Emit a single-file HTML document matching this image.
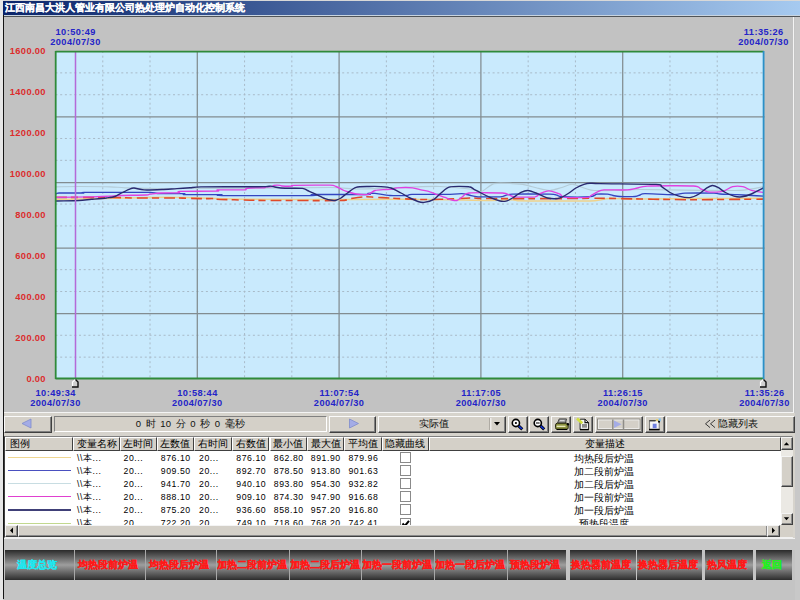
<!DOCTYPE html>
<html><head><meta charset="utf-8"><style>
*{margin:0;padding:0;box-sizing:border-box}
html,body{width:800px;height:600px;overflow:hidden;background:#c4c4c4;font-family:"Liberation Sans",sans-serif;position:relative}
.abs{position:absolute}
#lstrip{position:absolute;left:0;top:0;width:3px;height:600px;background:#e6e6e6}
#lline{position:absolute;left:3px;top:15px;width:1px;height:584px;background:#151515}
#title{position:absolute;left:3px;top:1px;width:797px;height:13.5px;background:linear-gradient(to right,#0a246a 0%,#a6caf0 100%);color:#fff;font-weight:700;-webkit-text-stroke:0.2px #fff;font-size:10px;line-height:13.5px;padding-left:2px;white-space:nowrap;letter-spacing:0px}
#topstrip{position:absolute;left:0;top:0;width:800px;height:1px;background:#d8d8d8}
#tline1{position:absolute;left:3px;top:14.5px;width:797px;height:1px;background:#c8d4e0}
#tline2{position:absolute;left:3px;top:15.5px;width:797px;height:1px;background:#505458}
#panel{position:absolute;left:4px;top:16.5px;width:790px;height:396px;background:#c2c2c2;border-right:1px solid #f4f4f4;border-bottom:1px solid #f4f4f4}
#rstrip{position:absolute;left:795px;top:16.5px;width:5px;height:584px;background:#c8c8c8}
.yl{position:absolute;left:0;width:45.9px;text-align:right;color:#dc2c2c;font-weight:bold;font-size:9.3px;line-height:12px;letter-spacing:0.35px}
.tl{position:absolute;width:80px;text-align:center;color:#2424c8;font-weight:bold;font-size:9.2px;line-height:10px;letter-spacing:0.45px;text-indent:0.45px}
#lower{position:absolute;left:4px;top:413px;width:791px;height:125px;background:#d6d3cc}
.btn{position:absolute;top:416px;height:16.5px;background:#d4d0c8;border-top:1px solid #fafafa;border-left:1px solid #fafafa;border-right:1px solid #404040;border-bottom:1px solid #404040;box-shadow:inset -1px -1px 0 #808080}
.field{position:absolute;top:416px;height:16px;background:#d4d0c8;border-top:1px solid #808080;border-left:1px solid #808080;border-right:1px solid #fff;border-bottom:1px solid #fff;font-size:9.5px;line-height:14px;text-align:center;color:#101010;font-weight:500}
#table{position:absolute;left:4px;top:436px;width:789px;height:102px;background:#fff;border-top:1px solid #808080;border-left:1px solid #404040;border-right:1px solid #e8e8e8;border-bottom:1px solid #f0f0f0}
.th{position:absolute;top:437px;height:13.5px;background:#d4d0c8;border-top:1px solid #fff;border-left:1px solid #fff;border-right:1px solid #404040;border-bottom:1px solid #404040;font-size:9.5px;line-height:11.5px;text-align:center;color:#000;font-weight:500;white-space:nowrap;overflow:hidden}
.td{position:absolute;font-size:8.7px;line-height:13px;color:#000;white-space:nowrap;letter-spacing:0.55px}
.num{text-align:right;padding-right:2.3px}
.desc{left:428px;width:352px;text-align:center;font-size:9.5px;letter-spacing:0}
.lg{position:absolute;left:8px;width:63px;height:1.2px}
.cb{position:absolute;left:400px;width:11px;height:11px;border:1px solid #8a8a8a;background:#fff;margin-top:0.5px;font-size:9px;line-height:10px;text-align:center;color:#000}
#clip{position:absolute;left:5px;top:451px;width:775px;height:74px;overflow:hidden}
.sbb{position:absolute;background:#d4d0c8;border-top:1px solid #f4f4f4;border-left:1px solid #f4f4f4;border-right:1px solid #404040;border-bottom:1px solid #404040;box-shadow:inset -1px -1px 0 #8a8a8a}
.bb{position:absolute;top:550.3px;height:29.4px;background:linear-gradient(to bottom,#2a2a2a 0%,#424242 10%,#9e9e9e 50%,#444444 90%,#2c2c2c 100%);font-size:9.7px;font-weight:700;-webkit-text-stroke:0.25px currentColor;line-height:29px;text-align:center;padding-right:4px;white-space:nowrap;overflow:hidden;border-left:1px solid #a8a8a8}
#bstrip{position:absolute;left:4px;top:538px;width:791px;height:12px;background:#c8c8c8;border-top:1px solid #f0f0f0}
</style></head><body>
<div id="topstrip"></div>
<div id="lstrip"></div>
<div id="title">江西南昌大洪人管业有限公司热处理炉自动化控制系统</div>
<div id="tline1"></div><div id="tline2"></div>
<div id="panel"></div>
<div id="rstrip"></div>
<svg width="800" height="600" style="position:absolute;left:0;top:0">
<rect x="55.5" y="51" width="708.3" height="328" fill="#c9eafd"/>
<line x1="102.77" y1="51" x2="102.77" y2="379" stroke="#a8bac8" stroke-width="1" stroke-dasharray="2,2.7"/>
<line x1="150.03" y1="51" x2="150.03" y2="379" stroke="#a8bac8" stroke-width="1" stroke-dasharray="2,2.7"/>
<line x1="244.57" y1="51" x2="244.57" y2="379" stroke="#a8bac8" stroke-width="1" stroke-dasharray="2,2.7"/>
<line x1="291.83" y1="51" x2="291.83" y2="379" stroke="#a8bac8" stroke-width="1" stroke-dasharray="2,2.7"/>
<line x1="386.37" y1="51" x2="386.37" y2="379" stroke="#a8bac8" stroke-width="1" stroke-dasharray="2,2.7"/>
<line x1="433.63" y1="51" x2="433.63" y2="379" stroke="#a8bac8" stroke-width="1" stroke-dasharray="2,2.7"/>
<line x1="528.17" y1="51" x2="528.17" y2="379" stroke="#a8bac8" stroke-width="1" stroke-dasharray="2,2.7"/>
<line x1="575.43" y1="51" x2="575.43" y2="379" stroke="#a8bac8" stroke-width="1" stroke-dasharray="2,2.7"/>
<line x1="669.97" y1="51" x2="669.97" y2="379" stroke="#a8bac8" stroke-width="1" stroke-dasharray="2,2.7"/>
<line x1="717.23" y1="51" x2="717.23" y2="379" stroke="#a8bac8" stroke-width="1" stroke-dasharray="2,2.7"/>
<line x1="55.5" y1="72.87" x2="764.5" y2="72.87" stroke="#a8bac8" stroke-width="1" stroke-dasharray="2,2.7"/>
<line x1="55.5" y1="94.73" x2="764.5" y2="94.73" stroke="#a8bac8" stroke-width="1" stroke-dasharray="2,2.7"/>
<line x1="55.5" y1="138.47" x2="764.5" y2="138.47" stroke="#a8bac8" stroke-width="1" stroke-dasharray="2,2.7"/>
<line x1="55.5" y1="160.33" x2="764.5" y2="160.33" stroke="#a8bac8" stroke-width="1" stroke-dasharray="2,2.7"/>
<line x1="55.5" y1="204.07" x2="764.5" y2="204.07" stroke="#a8bac8" stroke-width="1" stroke-dasharray="2,2.7"/>
<line x1="55.5" y1="225.93" x2="764.5" y2="225.93" stroke="#a8bac8" stroke-width="1" stroke-dasharray="2,2.7"/>
<line x1="55.5" y1="269.67" x2="764.5" y2="269.67" stroke="#a8bac8" stroke-width="1" stroke-dasharray="2,2.7"/>
<line x1="55.5" y1="291.53" x2="764.5" y2="291.53" stroke="#a8bac8" stroke-width="1" stroke-dasharray="2,2.7"/>
<line x1="55.5" y1="335.27" x2="764.5" y2="335.27" stroke="#a8bac8" stroke-width="1" stroke-dasharray="2,2.7"/>
<line x1="55.5" y1="357.13" x2="764.5" y2="357.13" stroke="#a8bac8" stroke-width="1" stroke-dasharray="2,2.7"/>
<line x1="197.30" y1="51" x2="197.30" y2="379" stroke="#828c90" stroke-width="1.25"/>
<line x1="55.5" y1="116.90" x2="764.5" y2="116.90" stroke="#828c90" stroke-width="1.25"/>
<line x1="339.10" y1="51" x2="339.10" y2="379" stroke="#828c90" stroke-width="1.25"/>
<line x1="55.5" y1="182.50" x2="764.5" y2="182.50" stroke="#828c90" stroke-width="1.25"/>
<line x1="480.90" y1="51" x2="480.90" y2="379" stroke="#828c90" stroke-width="1.25"/>
<line x1="55.5" y1="248.10" x2="764.5" y2="248.10" stroke="#828c90" stroke-width="1.25"/>
<line x1="622.70" y1="51" x2="622.70" y2="379" stroke="#828c90" stroke-width="1.25"/>
<line x1="55.5" y1="313.70" x2="764.5" y2="313.70" stroke="#828c90" stroke-width="1.25"/>
<path d="M56.0,186.8 C59.2,186.7 72.8,186.5 80.0,186.5 C87.2,186.5 104.0,186.6 110.0,186.8 C116.0,186.9 118.3,187.5 125.0,187.8 C131.7,188.0 143.3,188.4 160.0,188.5 C176.7,188.6 227.3,188.4 250.0,188.3 C272.7,188.2 315.3,187.4 330.0,187.5 C344.7,187.6 349.3,189.1 360.0,189.0 C370.7,188.9 399.3,187.3 410.0,187.0 C420.7,186.7 432.0,186.2 440.0,186.5 C448.0,186.8 464.5,188.3 470.0,189.0 C475.5,189.7 477.8,192.5 481.0,191.8 C484.2,191.0 489.8,184.7 494.0,183.6 C498.2,182.5 508.4,183.4 512.5,183.6 C516.6,183.8 521.7,184.2 525.0,184.8 C528.3,185.4 533.7,187.2 537.0,188.0 C540.3,188.8 546.7,190.6 550.0,190.5 C553.3,190.4 558.9,188.3 562.0,187.5 C565.1,186.7 568.7,183.9 573.0,184.3 C577.3,184.7 585.1,189.8 594.0,190.5 C602.9,191.2 625.9,189.5 640.0,189.5 C654.1,189.5 686.7,190.2 700.0,190.3 C713.3,190.4 731.5,190.8 740.0,190.3 C748.5,189.8 760.4,187.2 763.5,186.7" fill="none" stroke="#b4ccd8" stroke-width="1.2"/>
<path d="M56.0,199.5 C68.5,199.2 132.9,197.8 150.0,197.5 C167.1,197.2 170.7,197.3 184.0,197.5 C197.3,197.7 227.9,198.9 250.0,199.2 C272.1,199.5 330.0,199.5 350.0,199.5 C370.0,199.5 386.7,199.3 400.0,199.3 C413.3,199.3 438.4,199.6 450.0,199.8 C461.6,200.0 478.7,200.5 487.0,200.5 C495.3,200.5 507.6,199.8 512.0,199.8 C516.4,199.8 514.9,200.6 520.0,200.8 C525.1,201.0 540.7,201.0 550.0,201.0 C559.3,201.0 582.0,201.3 590.0,201.0 C598.0,200.7 603.3,198.9 610.0,198.6 C616.7,198.3 628.0,199.0 640.0,199.0 C652.0,199.0 683.5,198.6 700.0,198.5 C716.5,198.4 755.0,198.3 763.5,198.3" fill="none" stroke="#efd28a" stroke-width="1.5"/>
<path d="M56.0,197.4 C63.2,197.4 99.5,197.3 110.0,197.4 C120.5,197.5 126.3,197.9 135.0,198.0 C143.7,198.1 166.3,197.9 175.0,198.0 C183.7,198.1 194.8,198.5 200.0,198.6 C205.2,198.7 211.9,198.5 214.0,198.6 C216.1,198.7 211.2,199.0 216.0,199.2 C220.8,199.5 241.5,200.0 250.0,200.2 C258.5,200.4 268.0,200.5 280.0,200.5 C292.0,200.5 330.7,200.7 340.0,200.5 C349.3,200.3 346.7,199.2 350.0,198.7 C353.3,198.2 361.7,196.9 365.0,196.8 C368.3,196.6 371.7,197.1 375.0,197.3 C378.3,197.5 386.7,197.8 390.0,198.0 C393.3,198.2 396.0,198.4 400.0,198.6 C404.0,198.8 414.7,199.4 420.0,199.5 C425.3,199.6 433.3,199.5 440.0,199.3 C446.7,199.1 464.7,198.1 470.0,198.0 C475.3,197.9 476.0,198.3 480.0,198.4 C484.0,198.5 493.3,198.6 500.0,198.6 C506.7,198.6 522.0,198.6 530.0,198.6 C538.0,198.6 550.7,198.6 560.0,198.6 C569.3,198.6 589.3,198.2 600.0,198.3 C610.7,198.4 630.7,198.8 640.0,199.0 C649.3,199.2 662.0,199.4 670.0,199.5 C678.0,199.6 687.5,199.8 700.0,199.7 C712.5,199.6 755.0,199.2 763.5,199.1" fill="none" stroke="#e04a2a" stroke-width="1.6" stroke-dasharray="11,4,7,5"/>
<path d="M56.0,194.0 C56.4,193.9 55.4,193.1 59.0,193.0 C62.6,192.9 79.7,193.1 83.0,193.0 C86.3,192.9 77.9,192.5 84.0,192.4 C90.1,192.3 120.2,192.4 129.0,192.4 C137.8,192.4 145.9,192.2 150.0,192.4 C154.1,192.6 155.5,193.4 160.0,193.6 C164.5,193.8 180.7,193.5 184.0,193.6 C187.3,193.7 180.1,194.5 185.0,194.6 C189.9,194.7 216.1,194.5 221.0,194.6 C225.9,194.7 209.9,195.4 222.0,195.5 C234.1,195.6 299.9,195.6 312.0,195.5 C324.1,195.4 305.7,194.6 313.0,194.5 C320.3,194.4 359.7,194.6 367.0,194.5 C374.3,194.4 366.9,193.5 368.0,193.4 C369.1,193.3 372.1,193.1 375.0,193.4 C377.9,193.7 385.7,195.2 390.0,195.5 C394.3,195.8 404.1,195.6 407.0,195.5 C409.9,195.4 406.3,194.6 412.0,194.4 C417.7,194.2 443.3,194.4 450.0,194.3 C456.7,194.2 459.5,193.5 462.0,193.6 C464.5,193.7 466.9,194.6 469.0,195.0 C471.1,195.4 473.9,196.5 478.0,196.8 C482.1,197.0 496.7,196.8 500.0,196.8 C503.3,196.7 501.4,196.6 503.0,196.3 C504.6,196.0 505.7,194.5 512.0,194.2 C518.3,194.0 544.0,194.1 550.0,194.2 C556.0,194.4 555.4,194.9 557.0,195.2 C558.6,195.5 557.6,196.5 562.0,196.7 C566.4,196.9 585.3,197.0 590.0,196.7 C594.7,196.4 594.7,194.6 597.0,194.2 C599.3,193.9 605.4,194.1 607.5,194.2 C609.6,194.4 611.3,195.2 613.0,195.5 C614.7,195.8 617.1,196.4 620.0,196.5 C622.9,196.6 632.3,196.7 635.0,196.5 C637.7,196.3 638.7,195.4 640.0,195.0 C641.3,194.6 640.5,193.6 645.0,193.6 C649.5,193.6 668.7,194.8 674.0,194.7 C679.3,194.6 679.7,193.4 685.0,193.2 C690.3,193.0 709.3,193.1 714.0,193.2 C718.7,193.3 716.9,193.8 720.0,194.0 C723.1,194.2 732.7,194.5 737.0,194.7 C741.3,194.9 748.5,195.3 752.0,195.5 C755.5,195.7 762.0,196.0 763.5,196.1" fill="none" stroke="#3446c0" stroke-width="1.35"/>
<path d="M56.0,197.4 C60.8,197.3 84.8,197.1 92.0,196.9 C99.2,196.7 106.4,196.4 110.0,196.2 C113.6,196.0 114.2,195.7 119.0,195.5 C123.8,195.3 141.9,195.2 146.0,195.0 C150.1,194.8 148.0,194.5 150.0,194.2 C152.0,194.0 157.1,193.2 161.0,193.0 C164.9,192.8 176.5,193.0 179.0,192.8 C181.5,192.5 174.9,191.6 180.0,191.4 C185.1,191.2 211.9,191.3 217.0,191.1 C222.1,190.9 214.4,190.1 218.0,189.9 C221.6,189.7 240.3,190.1 244.0,189.9 C247.7,189.7 245.2,189.0 246.0,188.7 C246.8,188.4 247.6,188.1 250.0,188.0 C252.4,187.9 261.9,187.9 264.0,187.8 C266.1,187.6 264.9,186.9 266.0,186.8 C267.1,186.7 270.9,186.9 272.0,186.7 C273.1,186.5 272.9,185.6 274.0,185.4 C275.1,185.2 278.9,185.2 280.0,185.3 C281.1,185.4 280.4,185.9 282.0,186.0 C283.6,186.1 290.4,186.2 292.0,186.1 C293.6,186.0 288.9,185.4 294.0,185.3 C299.1,185.2 324.4,185.1 330.0,185.2 C335.6,185.4 334.1,185.8 336.0,186.5 C337.9,187.2 342.1,189.7 344.0,190.5 C345.9,191.3 348.4,191.9 350.0,192.4 C351.6,192.9 353.6,193.7 356.0,194.0 C358.4,194.3 365.5,194.8 368.0,194.3 C370.5,193.8 373.0,191.1 375.0,190.5 C377.0,189.9 380.9,189.7 383.0,189.6 C385.1,189.5 389.1,189.6 391.0,189.4 C392.9,189.2 394.6,188.0 397.5,187.8 C400.4,187.6 409.4,187.5 412.5,187.8 C415.6,188.1 418.7,189.4 421.0,189.9 C423.3,190.4 427.8,191.1 430.0,191.8 C432.2,192.4 435.5,194.1 437.5,194.9 C439.5,195.7 443.1,196.7 445.0,197.4 C446.9,198.1 450.4,199.6 452.0,200.0 C453.6,200.4 455.6,200.9 457.0,200.5 C458.4,200.1 460.9,197.8 462.5,196.8 C464.1,195.8 463.7,193.5 469.0,193.0 C474.3,192.5 497.2,192.7 502.5,193.0 C507.8,193.3 507.3,194.4 509.0,194.9 C510.7,195.4 511.5,196.5 515.0,196.8 C518.5,197.0 531.7,197.2 535.0,196.8 C538.3,196.3 538.4,194.4 540.0,193.6 C541.6,192.8 545.4,191.4 547.0,191.1 C548.6,190.8 550.3,190.9 552.0,191.3 C553.7,191.7 558.3,193.4 560.0,194.2 C561.7,195.1 561.3,197.0 565.0,197.4 C568.7,197.8 584.0,197.7 587.5,197.4 C591.0,197.1 589.7,196.3 591.0,195.5 C592.3,194.7 595.8,192.5 597.5,191.8 C599.2,191.0 600.0,190.1 604.0,189.9 C608.0,189.7 623.0,190.2 627.5,189.9 C632.0,189.6 634.8,188.5 637.5,188.0 C640.2,187.5 640.0,186.4 647.5,186.1 C655.0,185.8 686.4,185.6 693.5,186.0 C700.6,186.4 698.8,188.1 700.7,188.9 C702.6,189.7 705.5,191.4 708.0,191.8 C710.5,192.2 717.3,192.0 719.6,191.8 C721.9,191.6 723.7,191.0 725.4,190.3 C727.1,189.6 730.3,187.2 732.6,186.7 C734.9,186.2 740.3,186.2 742.8,186.7 C745.3,187.2 748.6,189.5 751.4,190.3 C754.2,191.1 761.9,192.2 763.5,192.5" fill="none" stroke="#e040e0" stroke-width="1.35"/>
<path d="M56.0,201.0 C59.1,200.9 74.3,200.7 79.0,200.5 C83.7,200.3 87.8,199.6 91.5,199.3 C95.2,199.0 103.4,198.4 106.5,198.0 C109.6,197.6 113.0,197.2 115.0,196.5 C117.0,195.8 119.6,194.0 121.5,193.0 C123.4,192.0 127.3,190.0 129.0,189.3 C130.7,188.6 132.0,187.9 134.0,188.0 C136.0,188.1 140.3,189.7 144.0,189.9 C147.7,190.1 157.6,189.7 162.0,189.5 C166.4,189.3 173.3,188.8 177.0,188.6 C180.7,188.4 186.8,188.0 190.0,187.8 C193.2,187.6 193.0,187.0 201.0,186.9 C209.0,186.8 241.3,186.8 250.0,186.8 C258.7,186.7 263.2,186.7 266.0,186.6 C268.8,186.5 269.7,186.0 271.0,186.1 C272.3,186.2 274.1,186.9 276.0,187.2 C277.9,187.5 281.5,188.0 285.0,188.2 C288.5,188.4 299.5,188.1 302.5,188.4 C305.5,188.7 305.7,189.7 307.5,190.5 C309.3,191.3 313.7,193.2 316.0,194.3 C318.3,195.4 322.9,197.8 325.0,198.6 C327.1,199.4 330.5,200.1 332.0,200.3 C333.5,200.5 334.8,200.5 336.0,200.2 C337.2,199.9 339.5,199.0 341.0,198.0 C342.5,197.0 345.5,194.4 347.5,193.0 C349.5,191.6 353.1,188.3 356.0,187.4 C358.9,186.5 365.7,186.6 369.0,186.5 C372.3,186.4 378.1,186.4 381.0,186.6 C383.9,186.8 388.3,187.1 391.0,188.0 C393.7,188.9 398.5,191.7 401.0,193.0 C403.5,194.3 407.7,196.9 410.0,198.0 C412.3,199.1 416.1,200.9 418.0,201.5 C419.9,202.1 421.9,202.7 424.0,202.4 C426.1,202.1 431.7,200.6 434.0,199.3 C436.3,198.0 438.9,194.7 441.0,193.0 C443.1,191.3 446.3,187.7 450.0,186.9 C453.7,186.1 465.8,186.4 469.0,186.8 C472.2,187.1 472.4,188.5 474.0,189.3 C475.6,190.1 478.9,191.9 481.0,193.0 C483.1,194.1 487.5,196.3 490.0,197.4 C492.5,198.5 497.9,200.5 500.0,201.0 C502.1,201.5 504.3,201.5 506.0,201.1 C507.7,200.7 510.5,199.2 512.5,198.0 C514.5,196.8 518.9,193.4 521.0,192.4 C523.1,191.4 525.8,190.3 528.0,190.5 C530.2,190.7 534.9,192.6 537.5,193.6 C540.1,194.6 544.8,197.3 547.5,198.0 C550.2,198.7 555.5,198.8 557.5,198.6 C559.5,198.4 561.0,197.5 562.5,196.8 C564.0,196.1 567.2,194.2 569.0,193.0 C570.8,191.8 574.0,189.2 576.0,188.0 C578.0,186.8 582.1,184.9 584.0,184.3 C585.9,183.7 587.9,183.3 590.0,183.2 C592.1,183.1 591.2,183.4 600.0,183.6 C608.8,183.8 647.8,184.0 656.0,184.4 C664.2,184.8 659.7,185.6 661.6,186.7 C663.5,187.8 667.7,191.2 670.0,192.5 C672.3,193.8 676.3,195.4 679.0,196.1 C681.7,196.8 687.3,197.9 690.0,197.6 C692.7,197.3 696.8,195.3 699.0,194.0 C701.2,192.7 704.7,189.2 706.5,188.1 C708.3,187.0 710.8,185.6 712.3,185.5 C713.8,185.4 716.3,186.5 718.0,187.4 C719.7,188.3 723.3,191.3 725.4,192.5 C727.5,193.7 731.8,195.5 734.0,196.1 C736.2,196.7 739.7,197.1 742.0,196.8 C744.3,196.5 748.5,195.2 751.4,194.0 C754.3,192.8 761.9,188.8 763.5,188.0" fill="none" stroke="#2a2a70" stroke-width="1.4"/>
<line x1="75.5" y1="51" x2="75.5" y2="379" stroke="#b46ad8" stroke-width="1.5"/>
<line x1="55.5" y1="51.6" x2="763.8" y2="51.6" stroke="#2f8a3a" stroke-width="1.8"/>
<line x1="55.5" y1="378.5" x2="763.8" y2="378.5" stroke="#2f8a3a" stroke-width="1.8"/>
<line x1="55.7" y1="51" x2="55.7" y2="379" stroke="#2f8a3a" stroke-width="1.8"/>
<line x1="763.6" y1="51" x2="763.6" y2="379" stroke="#2a90c8" stroke-width="1.8"/>
<path d="M72.5,387 L72.5,382 L75.5,379.5 L78.0,382 L78.0,387 Z" fill="#d0d0d0"/>
<path d="M72.5,386.5 L72.5,382 L75.5,379.5" fill="none" stroke="#ffffff" stroke-width="1.2"/>
<path d="M75.5,379.5 L78.0,382 L78.0,387 L72.0,387" fill="none" stroke="#101010" stroke-width="1.4"/>
<path d="M760.5,387 L760.5,382 L763.5,379.5 L766.0,382 L766.0,387 Z" fill="#d0d0d0"/>
<path d="M760.5,386.5 L760.5,382 L763.5,379.5" fill="none" stroke="#ffffff" stroke-width="1.2"/>
<path d="M763.5,379.5 L766.0,382 L766.0,387 L760.0,387" fill="none" stroke="#101010" stroke-width="1.4"/>
</svg>
<div class="yl" style="top:45.3px">1600.00</div>
<div class="yl" style="top:86.3px">1400.00</div>
<div class="yl" style="top:127.3px">1200.00</div>
<div class="yl" style="top:168.3px">1000.00</div>
<div class="yl" style="top:209.3px">800.00</div>
<div class="yl" style="top:250.3px">600.00</div>
<div class="yl" style="top:291.3px">400.00</div>
<div class="yl" style="top:332.3px">200.00</div>
<div class="yl" style="top:373.3px">0.00</div>

<div class="tl" style="left:35.5px;top:27.4px">10:50:49<br>2004/07/30</div>
<div class="tl" style="left:723.5px;top:27.4px">11:35:26<br>2004/07/30</div>
<div class="tl" style="left:15.5px;top:387.5px">10:49:34<br>2004/07/30</div>
<div class="tl" style="left:157.3px;top:387.5px">10:58:44<br>2004/07/30</div>
<div class="tl" style="left:299.1px;top:387.5px">11:07:54<br>2004/07/30</div>
<div class="tl" style="left:440.9px;top:387.5px">11:17:05<br>2004/07/30</div>
<div class="tl" style="left:582.7px;top:387.5px">11:26:15<br>2004/07/30</div>
<div class="tl" style="left:724.5px;top:387.5px">11:35:26<br>2004/07/30</div>

<div id="lower"></div>
<div class="btn" style="left:4px;width:47.5px"></div>
<div class="field" style="left:54px;width:272.5px;word-spacing:2px">0 时 10 分 0 秒 0 毫秒</div>
<div class="btn" style="left:328.7px;width:47.5px"></div>
<div class="btn" style="left:377.7px;width:128.5px;font-size:9.5px;line-height:14px;color:#101010;font-weight:500;padding-right:15px;text-align:center">实际值</div>
<div class="btn" style="left:507.5px;width:20px"></div>
<div class="btn" style="left:529.4px;width:20px"></div>
<div class="btn" style="left:551.2px;width:20px"></div>
<div class="btn" style="left:573px;width:20px"></div>
<div class="btn" style="left:595px;width:47.5px"></div>
<div class="btn" style="left:645px;width:19.5px"></div>
<div class="btn" style="left:666px;width:128.5px;font-size:9.5px;line-height:14px;color:#101010;text-align:left;padding-left:50.5px;font-weight:500">隐藏列表</div>
<div id="table"></div>
<div class="th" style="left:5.0px;width:68.0px;text-align:left;padding-left:4px;">图例</div><div class="th" style="left:73.0px;width:47.0px;">变量名称</div><div class="th" style="left:120.0px;width:36.6px;">左时间</div><div class="th" style="left:156.6px;width:37.4px;">左数值</div><div class="th" style="left:194.0px;width:37.6px;">右时间</div><div class="th" style="left:231.6px;width:37.9px;">右数值</div><div class="th" style="left:269.5px;width:37.5px;">最小值</div><div class="th" style="left:307.0px;width:37.0px;">最大值</div><div class="th" style="left:344.0px;width:37.6px;">平均值</div><div class="th" style="left:381.6px;width:47.4px;">隐藏曲线</div><div class="th" style="left:429.0px;width:352.0px;">变量描述</div>
<div id="clip"></div>
<div class="lg" style="top:457.0px;background:#efd690"></div><div class="td" style="top:451.5px;left:77px">\\本...</div><div class="td" style="top:451.5px;left:123.5px">20...</div><div class="td num" style="top:451.5px;left:155.6px;width:37.4px">876.10</div><div class="td" style="top:451.5px;left:199px">20...</div><div class="td num" style="top:451.5px;left:230.6px;width:37.9px">876.10</div><div class="td num" style="top:451.5px;left:268.5px;width:37.5px">862.80</div><div class="td num" style="top:451.5px;left:306px;width:37px">891.90</div><div class="td num" style="top:451.5px;left:343px;width:37.6px">879.96</div><div class="cb" style="top:451.5px"></div><div class="td desc" style="top:451.5px">均热段后炉温</div><div class="lg" style="top:470.1px;background:#4a50c0"></div><div class="td" style="top:464.6px;left:77px">\\本...</div><div class="td" style="top:464.6px;left:123.5px">20...</div><div class="td num" style="top:464.6px;left:155.6px;width:37.4px">909.50</div><div class="td" style="top:464.6px;left:199px">20...</div><div class="td num" style="top:464.6px;left:230.6px;width:37.9px">892.70</div><div class="td num" style="top:464.6px;left:268.5px;width:37.5px">878.50</div><div class="td num" style="top:464.6px;left:306px;width:37px">913.80</div><div class="td num" style="top:464.6px;left:343px;width:37.6px">901.63</div><div class="cb" style="top:464.6px"></div><div class="td desc" style="top:464.6px">加二段前炉温</div><div class="lg" style="top:483.2px;background:#c8dde2"></div><div class="td" style="top:477.7px;left:77px">\\本...</div><div class="td" style="top:477.7px;left:123.5px">20...</div><div class="td num" style="top:477.7px;left:155.6px;width:37.4px">941.70</div><div class="td" style="top:477.7px;left:199px">20...</div><div class="td num" style="top:477.7px;left:230.6px;width:37.9px">940.10</div><div class="td num" style="top:477.7px;left:268.5px;width:37.5px">893.80</div><div class="td num" style="top:477.7px;left:306px;width:37px">954.30</div><div class="td num" style="top:477.7px;left:343px;width:37.6px">932.82</div><div class="cb" style="top:477.7px"></div><div class="td desc" style="top:477.7px">加二段后炉温</div><div class="lg" style="top:496.3px;background:#e040d0"></div><div class="td" style="top:490.8px;left:77px">\\本...</div><div class="td" style="top:490.8px;left:123.5px">20...</div><div class="td num" style="top:490.8px;left:155.6px;width:37.4px">888.10</div><div class="td" style="top:490.8px;left:199px">20...</div><div class="td num" style="top:490.8px;left:230.6px;width:37.9px">909.10</div><div class="td num" style="top:490.8px;left:268.5px;width:37.5px">874.30</div><div class="td num" style="top:490.8px;left:306px;width:37px">947.90</div><div class="td num" style="top:490.8px;left:343px;width:37.6px">916.68</div><div class="cb" style="top:490.8px"></div><div class="td desc" style="top:490.8px">加一段前炉温</div><div class="lg" style="top:509.4px;background:#404078"></div><div class="td" style="top:503.9px;left:77px">\\本...</div><div class="td" style="top:503.9px;left:123.5px">20...</div><div class="td num" style="top:503.9px;left:155.6px;width:37.4px">875.20</div><div class="td" style="top:503.9px;left:199px">20...</div><div class="td num" style="top:503.9px;left:230.6px;width:37.9px">936.60</div><div class="td num" style="top:503.9px;left:268.5px;width:37.5px">858.10</div><div class="td num" style="top:503.9px;left:306px;width:37px">957.20</div><div class="td num" style="top:503.9px;left:343px;width:37.6px">916.80</div><div class="cb" style="top:503.9px"></div><div class="td desc" style="top:503.9px">加一段后炉温</div><div class="lg" style="top:522.5px;background:#c2d88e"></div><div class="td" style="top:517.0px;left:77px">\\本...</div><div class="td" style="top:517.0px;left:123.5px">20...</div><div class="td num" style="top:517.0px;left:155.6px;width:37.4px">722.20</div><div class="td" style="top:517.0px;left:199px">20...</div><div class="td num" style="top:517.0px;left:230.6px;width:37.9px">749.10</div><div class="td num" style="top:517.0px;left:268.5px;width:37.5px">718.60</div><div class="td num" style="top:517.0px;left:306px;width:37px">768.20</div><div class="td num" style="top:517.0px;left:343px;width:37.6px">742.41</div><div class="cb" style="top:517.0px"><svg width="9" height="9" style="position:absolute;left:0;top:0"><path d="M1.5,4.5 L3.8,7 L8,1.8" fill="none" stroke="#000" stroke-width="2"/></svg></div><div class="td desc" style="top:517.0px">预热段温度</div>
<div id="vtrack" style="position:absolute;left:780.5px;top:450px;width:12px;height:75px;background:#ebe9e4"></div>
<div class="sbb" style="left:780.5px;top:437px;width:12px;height:13px"></div>
<div class="sbb" style="left:780.5px;top:456px;width:12px;height:31px"></div>
<div class="sbb" style="left:780.5px;top:512.5px;width:12px;height:12px"></div>
<div class="sbb" style="left:5px;top:525px;width:12.5px;height:12px"></div>
<div class="sbb" style="left:17.5px;top:525px;width:750px;height:12px"></div>
<div class="sbb" style="left:767.3px;top:525px;width:12.5px;height:12px"></div>
<div style="position:absolute;left:780px;top:525px;width:12.5px;height:12px;background:#d4d0c8"></div>
<div id="bstrip"></div>
<svg width="800" height="600" style="position:absolute;left:0;top:0">
<path d="M22,423.5 L31,419 L31,428 Z" fill="#a4ace6" stroke="#7f8ccc" stroke-width="0.8"/>
<path d="M358.5,423.5 L349.5,419 L349.5,428 Z" fill="#a4ace6" stroke="#7f8ccc" stroke-width="0.8"/>
<line x1="489.8" y1="418" x2="489.8" y2="430" stroke="#a09c94" stroke-width="1"/>
<line x1="490.8" y1="418" x2="490.8" y2="430" stroke="#ffffff" stroke-width="1"/>
<path d="M494,422 L500,422 L497,425.5 Z" fill="#000"/>
<circle cx="515.9" cy="423" r="3.6" fill="#fff" stroke="#000" stroke-width="1.6"/>
<circle cx="515.9" cy="423" r="1.1" fill="#000"/>
<line x1="518.6" y1="425.8" x2="522.3" y2="429.3" stroke="#000" stroke-width="3"/>
<line x1="518.9" y1="426.1" x2="522" y2="429" stroke="#1030d0" stroke-width="1.6"/>
<circle cx="537.8" cy="423" r="3.6" fill="#fff" stroke="#000" stroke-width="1.6"/>
<line x1="536" y1="423" x2="539.6" y2="423" stroke="#303030" stroke-width="1.3"/>
<line x1="540.5" y1="425.8" x2="544.2" y2="429.3" stroke="#000" stroke-width="3"/>
<line x1="540.8" y1="426.1" x2="543.9" y2="429" stroke="#1030d0" stroke-width="1.6"/>
<path d="M557.5,423.2 L559.2,418.9 L566.5,418.9 L565.5,423.2 Z" fill="#9a9a9a" stroke="#3a3a3a" stroke-width="0.9"/>
<line x1="560" y1="420.6" x2="564.5" y2="420.6" stroke="#e8e8e8" stroke-width="0.9"/>
<rect x="555.6" y="423.2" width="12.6" height="6.3" rx="1.8" fill="#8e9440" stroke="#22220c" stroke-width="1"/>
<line x1="556.6" y1="426.3" x2="565.5" y2="426.3" stroke="#f2f2cc" stroke-width="1.2"/>
<line x1="557" y1="429.4" x2="567" y2="429.4" stroke="#000" stroke-width="1.3"/>
<circle cx="567.9" cy="424.2" r="1.2" fill="#000"/>
<path d="M580.2,419.2 L585,419.2 L588.6,422.6 L588.6,429.6 L580.2,429.6 Z" fill="#f4f4f4" stroke="#202020" stroke-width="1"/>
<line x1="580.2" y1="423" x2="580.2" y2="429.6" stroke="#808080" stroke-width="1.4"/>
<path d="M585,419.2 L585,422.6 L588.6,422.6" fill="none" stroke="#101010" stroke-width="1.1"/>
<line x1="580" y1="429.6" x2="588.8" y2="429.6" stroke="#000" stroke-width="1.4"/>
<rect x="582" y="424" width="5" height="3.7" fill="#8c8c8c"/>
<path d="M577,418.5 L582.3,423.3" stroke="#d2e040" stroke-width="2.6"/>
<rect x="597.5" y="419" width="42.5" height="10.5" fill="none" stroke="#8c8a84" stroke-width="1"/>
<rect x="598.5" y="420" width="40.5" height="8.5" fill="none" stroke="#f0f0f0" stroke-width="0.8"/>
<line x1="612.8" y1="419.5" x2="612.8" y2="429" stroke="#8f8d88" stroke-width="1.5"/>
<line x1="623.5" y1="419.5" x2="623.5" y2="429" stroke="#8f8d88" stroke-width="1.5"/>
<path d="M621.5,424.2 L614,420.5 L614,428 Z" fill="#a4ace6"/>
<rect x="649.6" y="420.6" width="9.6" height="8.9" fill="#f6f6f6" stroke="#707070" stroke-width="0.9"/>
<line x1="649.4" y1="420.8" x2="655.5" y2="420.8" stroke="#303030" stroke-width="1.2"/>
<line x1="649" y1="429.6" x2="659.6" y2="429.6" stroke="#000" stroke-width="1.6"/>
<rect x="652.7" y="423.7" width="3.9" height="4.5" fill="#7080e0"/>
<rect x="656" y="419" width="2.2" height="2.2" fill="#e8d070"/>
<rect x="658.7" y="418.4" width="2.1" height="3" fill="#80c0f0"/>
<circle cx="659" cy="421.8" r="1" fill="#000"/>
<path d="M710,420 L705.5,423.8 L710,427.6 M715,420 L710.5,423.8 L715,427.6" fill="none" stroke="#303030" stroke-width="0.95"/>
<path d="M783.8,445.2 L789.2,445.2 L786.5,442.2 Z" fill="#000"/>
<path d="M783.8,517.3 L789.2,517.3 L786.5,520.3 Z" fill="#000"/>
<path d="M10,530.5 L13,527.5 L13,533.5 Z" fill="#000"/>
<path d="M772,527.5 L775,530.5 L772,533.5 Z" fill="#000"/>
</svg>
<div class="bb" style="left:4.5px;width:69.9px;color:#1ee8f0;border-left:none;">温度总览</div><div class="bb" style="left:74.4px;width:71.0px;color:#ff1818;">均热段前炉温</div><div class="bb" style="left:145.4px;width:70.8px;color:#ff1818;">均热段后炉温</div><div class="bb" style="left:216.2px;width:72.6px;color:#ff1818;">加热二段前炉温</div><div class="bb" style="left:288.8px;width:72.0px;color:#ff1818;">加热二段后炉温</div><div class="bb" style="left:360.8px;width:73.2px;color:#ff1818;">加热一段前炉温</div><div class="bb" style="left:434px;width:73.3px;color:#ff1818;">加热一段后炉温</div><div class="bb" style="left:507.3px;width:58.7px;color:#ff1818;">预热段炉温</div><div class="bb" style="left:570px;width:65.6px;color:#ff1818;border-left:none;">换热器前温度</div><div class="bb" style="left:637.3px;width:65.1px;color:#ff1818;border-left:none;">换热器后温度</div><div class="bb" style="left:705.2px;width:47.8px;color:#ff1818;border-left:none;">热风温度</div><div class="bb" style="left:756px;width:36.2px;color:#20f020;border-left:none;">返回</div>
<div id="lline"></div>
</body></html>
